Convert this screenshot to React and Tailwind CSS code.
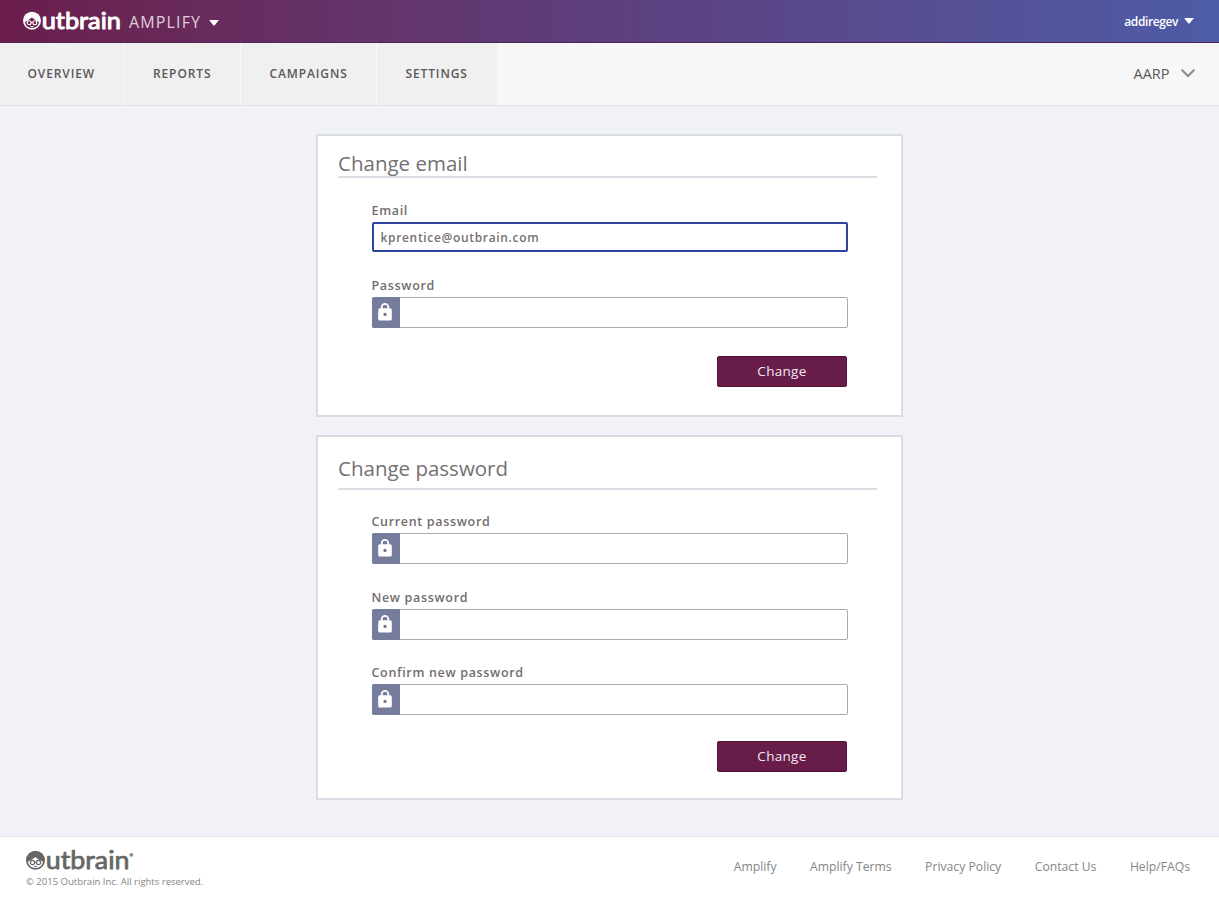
import React from 'react';

function Logo({ className, hair, face, weight, mark }) {
  return (
    <svg className={`overflow-visible ${className}`} viewBox="0 0 110 24" fill="none" aria-label="Outbrain">
      <circle cx="9.5" cy="11.3" r="9.5" fill={hair} />
      <path d="M2.1 12.6C5 11.4 7.4 9.5 9.3 8C11.2 9.5 13.6 11.4 16.9 12.6C16.6 16.7 13.4 18.9 9.5 18.9C5.6 18.9 2.4 16.7 2.1 12.6Z" fill={face} />
      <circle cx="6.5" cy="13.5" r="2.1" stroke={hair} strokeWidth="1.2" />
      <circle cx="12.5" cy="13.5" r="2.1" stroke={hair} strokeWidth="1.2" />
      <path d="M8.6 13.3H10.4M8 17.2Q9.5 17.9 11 17.2" stroke={hair} strokeWidth="1" />
      <text x="19.8" y="19.6" fill={hair} stroke={hair} strokeWidth={weight} strokeLinejoin="round" fontFamily="Lato, sans-serif" fontWeight="400" fontSize="25" textLength="83.7" lengthAdjust="spacingAndGlyphs">utbrain</text>
      {mark && <circle cx="105.3" cy="5.8" r="1.9" fill={hair} opacity="0.75" />}
    </svg>
  );
}

function Caret() {
  return (
    <svg className="h-[6px] w-[10px]" viewBox="0 0 10 6" fill="#fff">
      <path d="M1 0H9Q10 0 9.4 .8L5.7 5.3Q5 6 4.3 5.3L.6 .8Q0 0 1 0Z" />
    </svg>
  );
}

function Lock() {
  return (
    <svg className="h-[18px] w-[14px]" viewBox="0 0 14 18" fill="none">
      <path d="M3.7 6.5V4A3.3 3.1 0 0 1 10.3 4V6.5" stroke="#fff" strokeWidth="1.8" />
      <rect x="0.2" y="5.3" width="13.6" height="12.2" rx="1.6" fill="#fff" />
      <circle cx="7" cy="11.4" r="1.6" fill="#6d7596" />
    </svg>
  );
}

function Label({ children }) {
  return <label className="block h-[24px] pt-[3px] text-[12.5px] leading-[20px] font-semibold tracking-[0.67px] text-[#736c6f]">{children}</label>;
}

function PasswordField({ label, className = '' }) {
  return (
    <div className={className}>
      <Label>{label}</Label>
      <div className="flex h-[31px] w-[476px] rounded-[2px] border border-[#aaaaad] bg-white">
        <div className="-my-px -ml-px flex w-[28px] items-center justify-center rounded-l-[2px] bg-[#757c9c] pr-px pb-px">
          <Lock />
        </div>
      </div>
    </div>
  );
}

function Button({ className = '' }) {
  return (
    <button className={`block h-[31px] w-[130px] rounded-[2px] border border-[#551238] bg-[#681d49] pb-px text-[13.5px] leading-[28px] tracking-[0.3px] text-[#f3e9ef] ${className}`}>
      Change
    </button>
  );
}

const tabs = [
  ['OVERVIEW', 'w-[124px] pl-[27.5px]'],
  ['REPORTS', 'w-[115px] pl-[28px]'],
  ['CAMPAIGNS', 'w-[135px] pl-[28.5px]'],
  ['SETTINGS', 'w-[120px] pl-[28.5px]'],
];

export default function App() {
  return (
    <div className="flex h-[900px] w-[1219px] flex-col overflow-hidden bg-[#f0f2f7] font-['Open_Sans',sans-serif]">
      <header className="flex h-[43px] shrink-0 items-start border-b border-[#4e2459] bg-linear-to-r from-[#6b1d4b] via-[#5c3f7e] to-[#4d5ca6] pl-[23px]">
        <Logo className="mt-[9.5px] h-[22.7px] w-[104px] shrink-0" hair="#fff" face="#6b204e" weight="1.05" />
        <span className="ml-[2px] w-[74px] pt-[10px] text-[16px] leading-[24px] tracking-[1.15px] text-[#e0cedb]">AMPLIFY</span>
        <div className="ml-[6px] pt-[20px]"><Caret /></div>
        <div className="mr-[25px] ml-auto flex gap-[6px]">
          <span className="pt-[12px] text-[12px] leading-[20px] font-semibold tracking-[-0.4px] text-white">addiregev</span>
          <div className="pt-[18px]"><Caret /></div>
        </div>
      </header>
      <nav className="flex h-[63px] shrink-0 border-b border-[#e3e3e7] bg-[#f7f7f7]">
        <div className="flex gap-px bg-[#fafafa]">
          {tabs.map(([name, size]) => (
            <div key={name} className={`bg-[#f0f0f0] pt-[21px] text-[12px] leading-[20px] font-semibold tracking-[0.88px] whitespace-nowrap text-[#5c575a] ${size}`}>{name}</div>
          ))}
        </div>
        <div className="mr-[24.5px] ml-auto flex gap-[11px]">
          <span className="pt-[21px] text-[14.5px] leading-[20px] text-[#5c5759]">AARP</span>
          <svg className="mt-[26px] h-[9px] w-[14px]" viewBox="0 0 14 9" fill="none">
            <path d="M1.2 1.2L7 7L12.8 1.2" stroke="#8b898a" strokeWidth="2" strokeLinecap="round" />
          </svg>
        </div>
      </nav>
      <main className="ml-[316px] flex w-[587px] grow flex-col pt-[28px]">
        <section className="h-[283px] border-2 border-[#dadce3] bg-white pr-[24px] pl-[20px]">
          <h2 className="h-[42px] border-b-2 border-[#dadbe3] pt-[12px] text-[20.5px] leading-[30px] tracking-[0px] text-[#757072]">Change email</h2>
          <div className="pt-[20px] pl-[33.5px]">
            <Label>Email</Label>
            <div className="flex h-[30px] w-[476px] items-center rounded-[2px] border-2 border-[#2b429f] bg-white pt-px pl-[7px] text-[12px] font-semibold tracking-[0.67px] text-[#777174]">kprentice@outbrain.com</div>
            <PasswordField label="Password" className="mt-[21px]" />
            <Button className="mt-[28px] ml-[345.5px]" />
          </div>
        </section>
        <section className="mt-[18px] h-[365px] border-2 border-[#dadce3] bg-white pr-[24px] pl-[20px]">
          <h2 className="h-[53px] border-b-2 border-[#dadbe3] pt-[16px] text-[20.5px] leading-[30px] tracking-[0px] text-[#757072]">Change password</h2>
          <div className="pt-[19px] pl-[33.5px]">
            <PasswordField label="Current password" />
            <PasswordField label="New password" className="mt-[21px]" />
            <PasswordField label="Confirm new password" className="mt-[20px]" />
            <Button className="mt-[26px] ml-[345.5px]" />
          </div>
        </section>
      </main>
      <footer className="flex h-[64px] shrink-0 border-t border-[#e2e3e4] bg-white pl-[26px]">
        <div className="pt-[12px]">
          <Logo className="h-[24px] w-[110px]" hair="#666" face="#fff" weight="0.75" mark />
          <p className="mt-[2px] text-[9.5px] leading-[14px] text-[#858585]">© 2015 Outbrain Inc. All rights reserved.</p>
        </div>
        <div className="mr-[29px] ml-auto flex gap-[33.5px] pt-[20px] text-[12.2px] leading-[20px] text-[#858585]">
          <span>Amplify</span><span>Amplify Terms</span><span>Privacy Policy</span><span>Contact Us</span><span>Help/FAQs</span>
        </div>
      </footer>
    </div>
  );
}
